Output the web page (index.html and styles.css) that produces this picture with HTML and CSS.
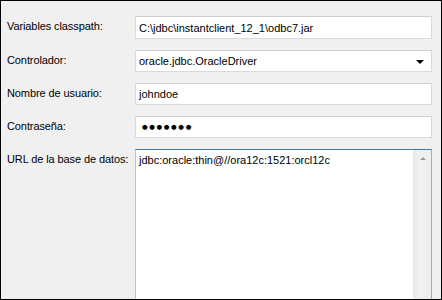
FILE: index.html
```html
<!DOCTYPE html>
<html lang="es">
<head>
    <meta charset="UTF-8">
    <title>Conexión JDBC</title>
    <link rel="stylesheet" href="styles.css">
</head>
<body>
    <div class="dialog">
        <div class="label">Variables classpath:</div>
        <div class="field">C:\jdbc\instantclient_12_1\odbc7.jar</div>

        <div class="label">Controlador:</div>
        <div class="field combo">
            <span>oracle.jdbc.OracleDriver</span>
            <span class="arrow"></span>
        </div>

        <div class="label">Nombre de usuario:</div>
        <div class="field">johndoe</div>

        <div class="label">Contraseña:</div>
        <div class="field password"><span class="dots">●●●●●●●</span></div>

        <div class="label">URL de la base de datos:</div>
        <div class="field memo">
            <span class="memo-text">jdbc:oracle:thin@//ora12c:1521:orcl12c</span>
            <div class="scrollbar"><span class="up"></span></div>
        </div>
    </div>
</body>
</html>
```

FILE: styles.css
```css
body {
    margin: 0;
    font-family: "Liberation Sans", Arial, sans-serif;
    font-size: 11px;
    color: #000;
}
.dialog {
    box-sizing: border-box;
    width: 442px;
    height: 300px;
    border: 1px solid #000;
    background: #f0f0f0;
    overflow: hidden;
    display: grid;
    grid-template-columns: 128px 297px;
    grid-template-rows: 23px 22px 22px 22px 1fr;
    row-gap: 11px;
    padding: 15px 0 0 6px;
}
.label {
    padding-top: 3px;
    line-height: 14px;
    letter-spacing: -0.1px;
}
.field {
    box-sizing: border-box;
    background: #fff;
    border: 1px solid #dadada;
    border-top-color: #cfcfcf;
    padding: 0 3px;
    display: flex;
    align-items: center;
    white-space: nowrap;
}
.combo {
    justify-content: space-between;
    padding-right: 7px;
}
.arrow {
    width: 0;
    height: 0;
    border-left: 4px solid transparent;
    border-right: 4px solid transparent;
    border-top: 4px solid #000;
    margin-top: 1px;
}
.password {
    padding-left: 6px;
}
.dots {
    font-family: "DejaVu Sans", sans-serif;
    font-size: 6.5px;
    letter-spacing: 1.6px;
    color: #000;
}
.memo {
    height: 160px;
    align-items: flex-start;
    justify-content: space-between;
    border: 1px solid #a4c9e3;
    border-top-color: #3d7bad;
    border-right-color: #7fb8e6;
    padding: 3px 0 0 3px;
}
.memo-text {
    line-height: 14px;
}
.scrollbar {
    width: 17px;
    height: 200px;
    margin-top: -3px;
    background: linear-gradient(to right, #eaeaea, #f2f2f2 40%, #ececec);
    border-left: 1px solid #e6e6e6;
    display: flex;
    justify-content: center;
}
.up {
    margin-top: 7px;
    width: 0;
    height: 0;
    border-left: 3px solid transparent;
    border-right: 3px solid transparent;
    border-bottom: 3px solid #9a9a9a;
}
```
